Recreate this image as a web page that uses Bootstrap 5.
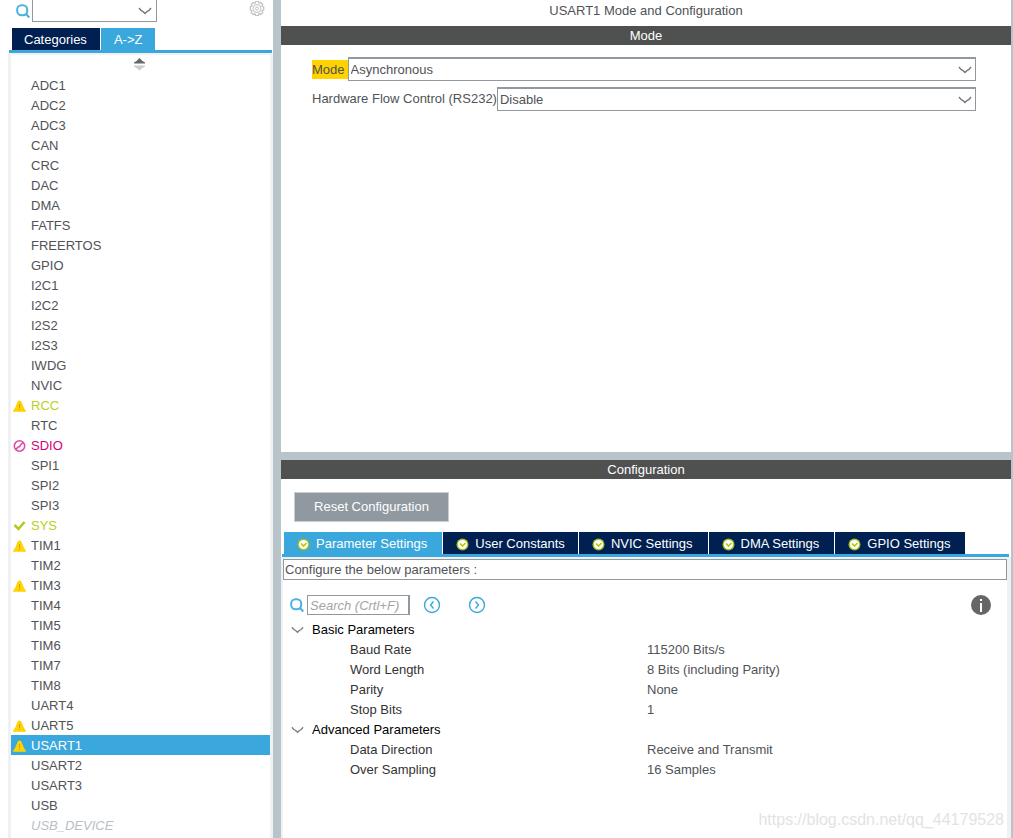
<!DOCTYPE html>
<html lang="en">
<head>
<meta charset="utf-8">
<meta name="viewport" content="width=device-width, initial-scale=1">
<title>USART1 Mode and Configuration</title>
<link href="https://cdn.jsdelivr.net/npm/bootstrap@5.3.0/dist/css/bootstrap.min.css" rel="stylesheet">
<style>
  :root { --sky: #3aa8dc; --navy: #002052; --slate: #9098a0; --split: #b9c4ca; --edge: #f0f1f2; --ink: #505256; }
  body { font: 13px/20px "Liberation Sans", Arial, sans-serif; color: var(--ink); background: #fff; }
  svg { display: block; flex: none; }
  .side-pane { width: 273px; flex: none; }
  .side-head { height: 28px; padding: 0 8px 0 16px; gap: 2px; }
  .combo { appearance: none; color: var(--ink); border: 1px solid var(--slate); border-top-width: 2px; border-radius: 0; height: 24px; padding: 0 24px 0 2px; min-width: 0;
    background: #fff url("data:image/svg+xml,%3Csvg xmlns='http://www.w3.org/2000/svg' width='14' height='8' fill='none' stroke='%23777' stroke-width='1.4'%3E%3Cpath d='M1 1 L3 3.500 L5 4.500 L7 6.500 L9 4.500 L11 3.500 L13 1'/%3E%3C/svg%3E") no-repeat right 3px center; }
  .side-head .combo { width: 125px; height: 22px; border-top: 0; background-position: right 4px center; }
  .tab-strip { border-bottom: 3px solid var(--sky); gap: 1px; }
  .tab-strip .nav-link { height: 22px; line-height: 20px; padding: 2px 13px 0; border-radius: 0; color: #fff; background: var(--navy); display: flex; align-items: center; }
  .tab-strip .nav-link.active { background: var(--sky); color: #fff; }
  .side-tabs { margin: 0 1px 0 9px; padding-left: 3px; }
  .side-tabs .nav-link:first-child { padding-left: 12px; }
  .side-list { margin-left: 8px; border: 3px solid var(--edge); border-width: 2px 3px 0; }
  .sorter { height: 20px; padding: 3px 2px 0 0; border: 0; background: none; }
  .ip-row { height: 20px; padding-top: 2px; color: inherit; text-decoration: none; }
  .ip-row .slot { width: 20px; padding-left: 2px; }
  .ip-row.on { background: var(--sky); color: #fff; }
  .ip-row.lime { color: #bccf1a; }
  .ip-row.pink { color: #d4007a; }
  .ip-row.dim { color: #b9c0c6; font-style: italic; }
  .split-v { width: 8px; background: var(--split); flex: none; }
  .split-h { height: 8px; background: var(--split); flex: none; }
  .work { border-right: 2px solid var(--split); min-width: 0; }
  .mode-pane { min-height: 452px; }
  .pane-title { font-size: 13px; line-height: 20px; height: 26px; padding-top: 1px; margin: 0; }
  .pane-bar { font-size: 13px; line-height: 19px; background: #4f5150; color: #fff; margin: 0; }
  .mode-form { padding: 12px 35px 0 31px; gap: 6px; }
  .hot { background: #ffd200; line-height: 19px; padding-right: 3px; }
  .reset-btn { border: 1px solid #c9cdd0; border-radius: 0; background: var(--slate); color: #fff; width: 155px; height: 30px; padding: 0; font-size: 13px; margin: 13px 0 10px 13px; }
  .cfg-tabs { margin: 0 2px 0 1px; padding-left: 2px; }
  .cfg-tabs .nav-link { gap: 6px; }
  .cfg-tabs .nav-link.active { padding: 2px 15px 0 13px; }
  .cfg-tabs .wide { padding: 2px 15px 0 13px; }
  .cfg-body { border: solid var(--edge); border-width: 2px 4px 0 2px; }
  .hint { border: 1px solid var(--slate); line-height: 19px; padding-left: 1px; }
  .tools { padding: 14px 16px 4px 7px; height: 40px; }
  .find { width: 103px; height: 20px; border: 1px solid var(--slate); border-right-width: 2px; padding: 1px 2px 0; border-radius: 0; margin: 0 13px 0 3px; }
  .find::placeholder { color: #a4a4a4; font-style: italic; opacity: 1; }
  .plain { border: 0; background: none; padding: 0; }
  .step-gap { margin-right: 27px; }
  .params { width: 100%; table-layout: fixed; }
  .params td, .params th { padding: 0; height: 20px; font-weight: 400; }
  .params tbody th[colspan] { padding-left: 8px; color: #000; }
  .params tbody th[scope=row] { padding-left: 67px; color: #333; }
  .name-col { width: 364px; }
  .watermark { position: absolute; right: 9px; bottom: 8px; font-size: 16px; color: #e3e3e3; }
</style>
</head>
<body>
<svg width="0" height="0" class="position-absolute" aria-hidden="true">
  <symbol id="warn" viewBox="0 0 13 12"><path d="M6.500 .5 8 1l3 7 2 3v.8H0V11l2-3 3-7z" fill="#ffd200"/><path d="M6.500 4v4M6.500 9v1" stroke="#c9a400" stroke-width="1"/></symbol>
  <symbol id="ban" viewBox="0 0 13 12"><g fill="none" stroke="#dc4fa5" stroke-width="1.600"><circle cx="6.500" cy="6" r="5.200"/><path d="M3 9.500 5 7l1.500-.3L8 4.500 10 2.500"/></g></symbol>
  <symbol id="tick" viewBox="0 0 13 12"><path d="m1.500 5 4 4L11.500 2" fill="none" stroke="#b4c81a" stroke-width="2.500"/></symbol>
  <symbol id="lens" viewBox="0 0 14 14"><rect x="1.200" y="1.200" width="10" height="10" rx="4.300" fill="none" stroke="#4ab1e0" stroke-width="2"/><path d="m9.500 9.500 3.800 4" stroke="#4ab1e0" stroke-width="2.200"/></symbol>
  <symbol id="okay" viewBox="0 0 13 13"><circle cx="6.500" cy="6.500" r="6" fill="#a9bd1a"/><circle cx="6.500" cy="6.500" r="4.600" fill="#fff"/><path d="m4 5.500 2.500 2.500L9.500 5" fill="none" stroke="#b2c61a" stroke-width="1.700"/></symbol>
  <symbol id="chev" viewBox="0 0 14 8"><path d="M1 1 3 3.500 5 4.500 7 6.500 9 4.500 11 3.500 13 1" fill="none" stroke="#808080" stroke-width="1.500"/></symbol>
</svg>

<div class="d-flex min-vh-100 position-relative">
  <aside class="side-pane d-flex flex-column">
    <div class="side-head d-flex align-items-start">
      <label for="ipSearch" class="pt-1" aria-label="Search"><svg width="14" height="14"><use href="#lens"/></svg></label>
      <select id="ipSearch" class="combo" aria-label="Search peripherals"><option></option></select>
      <button class="plain ms-auto" type="button" aria-label="Options"><svg width="16" height="17" viewBox="0 0 16 17" fill="none" stroke="#c2c2c2"><path d="M6.500 1.500h3l.5 1.700 1.700-.7 2 2-.8 1.700 1.800.8v3l-1.800.8.8 1.700-2 2-1.700-.8-.5 1.800h-3l-.6-1.800-1.700.8-2-2 .8-1.700-1.700-.8V7l1.700-.8-.8-1.700 2-2 1.700.8z" stroke-width="1.200"/><circle cx="8" cy="8.500" r="4"/><circle cx="8" cy="8.500" r="1.500"/></svg></button>
    </div>
    <nav class="nav tab-strip side-tabs">
      <a class="nav-link" href="#cat">Categories</a>
      <a class="nav-link active" href="#az">A-&gt;Z</a>
    </nav>
    <div class="side-list flex-grow-1 d-flex flex-column">
      <button class="sorter d-flex justify-content-center" type="button" aria-label="Sort"><svg width="11" height="13" viewBox="0 0 11 13"><path d="M0 5.500V4.500L2.500 3 5.500 0l3 3L11 4.500v1z" fill="#666"/><path d="M0 7.500h11v1L8.500 10l-3 2.500-3-2.500L0 8.500z" fill="#ccc"/></svg></button>
      <div id="ipList"></div>
    </div>
  </aside>
  <div class="split-v"></div>

  <main class="work flex-grow-1 d-flex flex-column">
    <section class="mode-pane">
      <h1 class="pane-title text-center">USART1 Mode and Configuration</h1>
      <h2 class="pane-bar text-center">Mode</h2>
      <form class="mode-form d-flex flex-column">
        <div class="d-flex align-items-center">
          <label class="hot" for="mode">Mode</label>
          <select id="mode" class="combo flex-grow-1"><option>Asynchronous</option></select>
        </div>
        <div class="d-flex align-items-center">
          <label for="flow">Hardware Flow Control (RS232)</label>
          <select id="flow" class="combo flex-grow-1"><option>Disable</option></select>
        </div>
      </form>
    </section>
    <div class="split-h"></div>
    <section class="flex-grow-1 d-flex flex-column">
      <h2 class="pane-bar text-center">Configuration</h2>
      <div><button class="btn reset-btn" type="button">Reset Configuration</button></div>
      <nav class="nav tab-strip cfg-tabs">
        <a class="nav-link active" href="#p"><svg width="13" height="13"><use href="#okay"/></svg>Parameter Settings</a>
        <a class="nav-link" href="#u"><svg width="13" height="13"><use href="#okay"/></svg>User Constants</a>
        <a class="nav-link wide" href="#n"><svg width="13" height="13"><use href="#okay"/></svg>NVIC Settings</a>
        <a class="nav-link wide" href="#d"><svg width="13" height="13"><use href="#okay"/></svg>DMA Settings</a>
        <a class="nav-link wide" href="#g"><svg width="13" height="13"><use href="#okay"/></svg>GPIO Settings</a>
      </nav>
      <div class="cfg-body flex-grow-1">
        <div class="hint">Configure the below parameters :</div>
        <div class="tools d-flex align-items-center">
          <label for="find" aria-label="Search"><svg width="14" height="14"><use href="#lens"/></svg></label>
          <input id="find" class="find" type="text" placeholder="Search (Crtl+F)">
          <button class="plain step-gap" type="button" aria-label="Previous"><svg width="18" height="18" viewBox="0 0 18 18" fill="none" stroke="#3aa8dc" stroke-width="1.400"><circle cx="9" cy="9" r="7.500"/><path d="M10.500 5.500 7.500 9l3 3.500"/></svg></button>
          <button class="plain" type="button" aria-label="Next"><svg width="18" height="18" viewBox="0 0 18 18" fill="none" stroke="#3aa8dc" stroke-width="1.400"><circle cx="9" cy="9" r="7.500"/><path d="M7.500 5.500l3 3.500-3 3.500"/></svg></button>
          <button class="plain ms-auto" type="button" aria-label="Information"><svg width="20" height="20" viewBox="0 0 20 20"><circle cx="10" cy="10" r="10" fill="#666"/><path d="M10 4v2M10 8v9" stroke="#fff" stroke-width="2"/></svg></button>
        </div>
        <table class="params">
          <colgroup><col class="name-col"><col></colgroup>
          <tbody>
            <tr><th colspan="2"><span class="d-flex align-items-center gap-2"><svg width="13" height="8"><use href="#chev"/></svg>Basic Parameters</span></th></tr>
            <tr><th scope="row">Baud Rate</th><td>115200 Bits/s</td></tr>
            <tr><th scope="row">Word Length</th><td>8 Bits (including Parity)</td></tr>
            <tr><th scope="row">Parity</th><td>None</td></tr>
            <tr><th scope="row">Stop Bits</th><td>1</td></tr>
            <tr><th colspan="2"><span class="d-flex align-items-center gap-2"><svg width="13" height="8"><use href="#chev"/></svg>Advanced Parameters</span></th></tr>
            <tr><th scope="row">Data Direction</th><td>Receive and Transmit</td></tr>
            <tr><th scope="row">Over Sampling</th><td>16 Samples</td></tr>
          </tbody>
        </table>
      </div>
    </section>
  </main>
  <div class="watermark">https://blog.csdn.net/qq_44179528</div>
</div>

<script src="https://cdn.jsdelivr.net/npm/bootstrap@5.3.0/dist/js/bootstrap.bundle.min.js"></script>
<script>
  // name | icon | row style
  const peripherals = `ADC1,ADC2,ADC3,CAN,CRC,DAC,DMA,FATFS,FREERTOS,GPIO,I2C1,I2C2,I2S2,I2S3,IWDG,NVIC,RCC|warn|lime,RTC,SDIO|ban|pink,SPI1,SPI2,SPI3,SYS|tick|lime,TIM1|warn,TIM2,TIM3|warn,TIM4,TIM5,TIM6,TIM7,TIM8,UART4,UART5|warn,USART1|warn|on,USART2,USART3,USB,USB_DEVICE||dim`;
  document.getElementById('ipList').innerHTML = peripherals.split(',').map(p => {
    const [name, icon, look] = p.split('|');
    return `<a href="#${name}" class="ip-row d-flex align-items-center ${look || ''}"><span class="slot">${icon ? `<svg width="13" height="12"><use href="#${icon}"/></svg>` : ''}</span>${name}</a>`;
  }).join('');
</script>
</body>
</html>
